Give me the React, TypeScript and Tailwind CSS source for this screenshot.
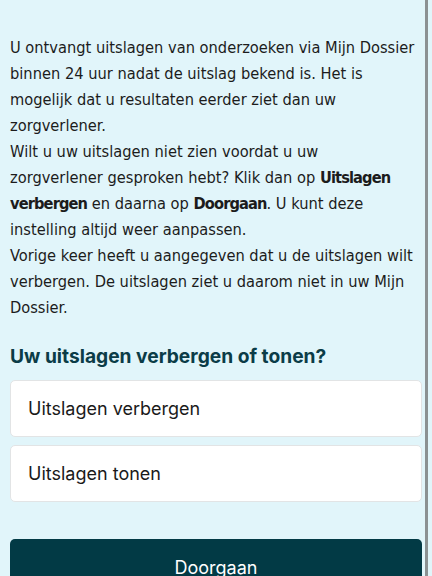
import React from "react";

const body = { fontFamily: '"DejaVu Sans Condensed", "DejaVu Sans", sans-serif' };
const ui = { fontFamily: 'Inter, "Liberation Sans", sans-serif' };

function B({ children }: { children: React.ReactNode }) {
  return <b className="font-bold tracking-[-0.9px]">{children}</b>;
}

export default function App() {
  return (
    <div className="relative w-[432px] h-[576px] overflow-hidden bg-[#e1f5fa]">
      <div className="absolute top-0 bottom-0 right-[4px] w-[3px] bg-[#8b9192]" />
      <div className="w-[412px] ml-[10px] pt-[35px] flex flex-col">
        <div className="text-[16.3px] leading-[26px] text-[#1c1c1c] whitespace-nowrap" style={body}>
          <p>
            U ontvangt uitslagen van onderzoeken via Mijn Dossier
            <br />
            binnen 24 uur nadat de uitslag bekend is. Het is
            <br />
            mogelijk dat u resultaten eerder ziet dan uw
            <br />
            zorgverlener.
          </p>
          <p>
            Wilt u uw uitslagen niet zien voordat u uw
            <br />
            zorgverlener gesproken hebt? Klik dan op <B>Uitslagen</B>
            <br />
            <B>verbergen</B> en daarna op <B>Doorgaan</B>. U kunt deze
            <br />
            instelling altijd weer aanpassen.
          </p>
          <p>
            Vorige keer heeft u aangegeven dat u de uitslagen wilt
            <br />
            verbergen. De uitslagen ziet u daarom niet in uw Mijn
            <br />
            Dossier.
          </p>
        </div>
        <h2 className="mt-[23px] text-[19.2px] leading-[24px] font-bold text-[#0b3c47]" style={ui}>
          Uw uitslagen verbergen of tonen?
        </h2>
        <div className="mt-[12px] flex flex-col gap-[8px]" style={ui}>
          <div className="h-[57px] flex items-center px-[17px] bg-white border border-[#e2e4e5] rounded-[5px] text-[18px] text-[#1a1a1a]">
            Uitslagen verbergen
          </div>
          <div className="h-[57px] flex items-center px-[17px] bg-white border border-[#e2e4e5] rounded-[5px] text-[18px] text-[#1a1a1a]">
            Uitslagen tonen
          </div>
        </div>
        <button
          className="mt-[37px] h-[56px] w-full rounded-[5px] bg-[#023a45] text-white text-[18px] flex items-center justify-center"
          style={ui}
        >
          Doorgaan
        </button>
      </div>
    </div>
  );
}
